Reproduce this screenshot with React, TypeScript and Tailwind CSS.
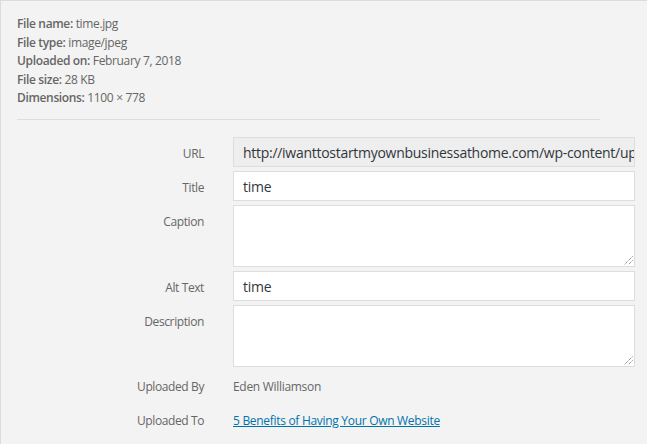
import React from "react";

const font = { fontFamily: '"Segoe UI", "Open Sans", "Noto Sans", sans-serif' };

function Row({ label, children, plain, extra }: { label: string; children: React.ReactNode; plain?: boolean; extra?: string }) {
  return (
    <div className={"flex items-start " + (extra ?? "")}>
      <div
        className={
          "w-[203px] h-[30px] text-right text-[12px] leading-[30px] tracking-[-0.4px] text-[#666] shrink-0 " +
          (plain ? "pt-[1px]" : "pt-[2px]")
        }
      >
        {label}
      </div>
      <div className="ml-[29px] w-[402px]">{children}</div>
    </div>
  );
}

export default function App() {
  return (
    <div
      className="w-[647px] h-[444px] bg-[#f3f3f3] border-l border-t border-[#dcdcdc] overflow-hidden"
      style={font}
    >
      <div className="pl-[16px] pt-[14px] text-[12px] leading-[18.5px] tracking-[-0.35px] text-[#666]">
        <div><b className="font-semibold">File name:</b> time.jpg</div>
        <div><b className="font-semibold">File type:</b> image/jpeg</div>
        <div><b className="font-semibold">Uploaded on:</b> February 7, 2018</div>
        <div><b className="font-semibold">File size:</b> 28 KB</div>
        <div><b className="font-semibold">Dimensions:</b> 1100 × 778</div>
      </div>
      <div className="ml-[16px] mt-[11px] w-[583px] h-px bg-[#dddddd]" />
      <div className="mt-[17px] flex flex-col gap-[4px]">
        <Row label="URL">
          <div className="h-[30px] border border-[#dddddd] bg-[#eeeeee] pl-[9px] pr-[2px] text-[14px] leading-[29px] tracking-[-0.28px] text-[#32373c] whitespace-nowrap overflow-hidden">
            http://iwanttostartmyownbusinessathome.com/wp-content/uploads/2018/02/time.jpg
          </div>
        </Row>
        <Row label="Title">
          <div className="h-[30px] border border-[#dddddd] bg-white px-[9px] text-[14px] leading-[29px] tracking-[-0.28px] text-[#32373c]">time</div>
        </Row>
        <Row label="Caption">
          <div className="relative h-[62px] border border-[#dddddd] bg-white">
            <Grip />
          </div>
        </Row>
        <Row label="Alt Text">
          <div className="h-[30px] border border-[#dddddd] bg-white px-[9px] text-[14px] leading-[29px] tracking-[-0.28px] text-[#32373c]">time</div>
        </Row>
        <Row label="Description">
          <div className="relative h-[62px] border border-[#dddddd] bg-white">
            <Grip />
          </div>
        </Row>
        <Row label="Uploaded By" plain>
          <div className="pt-[1px] text-[12px] leading-[30px] tracking-[-0.3px] text-[#666]">Eden Williamson</div>
        </Row>
        <Row label="Uploaded To" plain extra="-mt-[1px]">
          <a href="#" className="block pt-[1px] text-[12px] leading-[30px] tracking-[-0.3px] text-[#0073aa] underline">5 Benefits of Having Your Own Website</a>
        </Row>
      </div>
    </div>
  );
}

function Grip() {
  return (
    <svg className="absolute right-[1px] bottom-[1px]" width="9" height="9" viewBox="0 0 9 9">
      <line x1="8.5" y1="0.5" x2="0.5" y2="8.5" stroke="#666" strokeWidth="1" strokeDasharray="1 1" />
      <line x1="8.5" y1="4.5" x2="4.5" y2="8.5" stroke="#666" strokeWidth="1" strokeDasharray="1 1" />
    </svg>
  );
}
